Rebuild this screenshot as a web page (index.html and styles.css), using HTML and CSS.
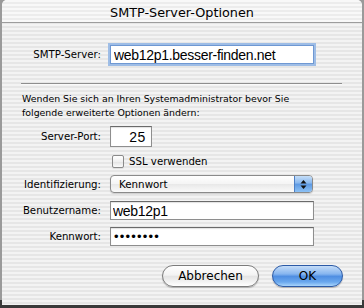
FILE: index.html
```html
<!DOCTYPE html>
<html lang="de">
<head>
    <meta charset="UTF-8">
    <meta name="viewport" content="width=device-width, initial-scale=1.0">
    <title>SMTP-Server-Optionen</title>
    <link rel="stylesheet" href="styles.css">
</head>
<body>
    <div class="window">
        <div class="titlebar">SMTP-Server-Optionen</div>
        <form class="content" id="smtpForm">
            <div class="form-row row-server">
                <label class="label" for="server">SMTP-Server:</label>
                <input class="field focused" type="text" id="server" value="web12p1.besser-finden.net">
            </div>
            <div class="divider"></div>
            <p class="note">Wenden Sie sich an Ihren Systemadministrator bevor Sie<br>folgende erweiterte Optionen ändern:</p>
            <div class="form-row row-port">
                <label class="label" for="port">Server-Port:</label>
                <input class="field port" type="text" id="port" value="25">
            </div>
            <div class="form-row row-check">
                <span class="checkbox"></span>
                <span class="check-label">SSL verwenden</span>
            </div>
            <div class="form-row row-auth">
                <span class="label">Identifizierung:</span>
                <div class="popup">
                    <span class="popup-value">Kennwort</span>
                    <span class="popup-arrows">
                        <svg width="7" height="11" viewBox="0 0 7 11">
                            <path d="M3.5 1 L6.5 4.5 L0.5 4.5 Z" fill="#111"/>
                            <path d="M3.5 10 L6.5 6.5 L0.5 6.5 Z" fill="#111"/>
                        </svg>
                    </span>
                </div>
            </div>
            <div class="form-row row-user">
                <label class="label" for="user">Benutzername:</label>
                <input class="field" type="text" id="user" value="web12p1">
            </div>
            <div class="form-row row-pass">
                <label class="label" for="pass">Kennwort:</label>
                <div class="field dots" id="pass">&bull;&bull;&bull;&bull;&bull;&bull;&bull;&bull;</div>
            </div>
            <div class="buttons">
                <button type="button" class="btn">Abbrechen</button>
                <button type="submit" class="btn btn-default">OK</button>
            </div>
        </form>
    </div>
</body>
</html>
```

FILE: styles.css
```css
* { box-sizing: border-box; }
html, body { margin: 0; height: 100%; }
body {
    background: linear-gradient(to bottom, #9a9a9a 0, #9a9a9a 300px, #3a3a3a 300px);
    font-family: "DejaVu Sans", Verdana, sans-serif;
    color: #000;
    overflow: hidden;
}
.window {
    margin: 0 2px;
    width: 360px;
    height: 305px;
    border-radius: 5px 5px 0 0;
    background: repeating-linear-gradient(to bottom, #f3f3f3 0, #f3f3f3 2px, #e6e6e6 2px, #e6e6e6 4px);
    display: flex;
    flex-direction: column;
    overflow: hidden;
}
.titlebar {
    height: 23px;
    border-bottom: 1px solid #9c9c9c;
    text-align: center;
    font-size: 12.8px;
    line-height: 25px;
    background: repeating-linear-gradient(to bottom, #f8f8f8 0, #f8f8f8 2px, #ececec 2px, #ececec 4px);
}
.content { display: flex; flex-direction: column; margin: 0; }
.form-row { display: flex; align-items: center; }
.label {
    width: 99px;
    margin-right: 9px;
    text-align: right;
    font-size: 10.2px;
    white-space: nowrap;
}
.field {
    width: 204px;
    height: 19px;
    padding: 0 2px;
    border: 1px solid #8e8e8e;
    border-top-color: #6a6a6a;
    background: #fff;
    box-shadow: inset 0 1px 1px rgba(0,0,0,.12);
    font-family: "Liberation Sans", Arial, sans-serif;
    font-size: 14px;
    letter-spacing: -0.3px;
    color: #000;
    outline: none;
    margin: 0;
}
.field.focused {
    padding-left: 3px;
    border-color: #6f98d2;
    box-shadow: 0 0 0 2px #9ebde6;
}
.row-server { margin-top: 22px; }
.divider {
    height: 1px;
    margin: 19px 20px 0 19px;
    background: #8e8e8e;
    box-shadow: 0 1px 0 #fafafa;
}
.note {
    margin: 8px 0 0 20px;
    font-size: 9.4px;
    line-height: 14px;
}
.row-port { margin-top: 6px; }
.field.port {
    width: 42px;
    height: 21px;
    text-align: right;
    padding-right: 5px;
    letter-spacing: 0.6px;
}
.row-check { margin-top: 8px; padding-left: 110px; }
.checkbox {
    width: 12px;
    height: 13px;
    border: 1px solid #8a8a8a;
    border-radius: 2px;
    background: linear-gradient(#ffffff, #f0f0f0 50%, #e2e2e2 51%, #fbfbfb);
    box-shadow: 0 1px 0 rgba(0,0,0,.08);
}
.check-label { margin-left: 5px; font-size: 10.2px; }
.row-auth { margin-top: 7px; }
.popup {
    width: 203px;
    height: 18px;
    display: flex;
    align-items: center;
    border: 1px solid #8a8a8a;
    border-radius: 4px;
    background: linear-gradient(#ffffff, #f4f4f4 50%, #e8e8e8 51%, #fafafa);
    box-shadow: 0 1px 1px rgba(0,0,0,.15);
    overflow: hidden;
}
.popup-value { flex: 1; padding-left: 8px; font-size: 10.3px; }
.popup-arrows {
    width: 18px;
    height: 100%;
    display: flex;
    align-items: center;
    justify-content: center;
    border-left: 1px solid #4d7fc4;
    background: linear-gradient(#c5def8, #86b6ee 45%, #5c98e2 50%, #8cc1f5 100%);
}
.row-user { margin-top: 8px; }
.row-pass { margin-top: 7px; }
.dots {
    font-size: 13px;
    letter-spacing: 1.2px;
    line-height: 17px;
    padding-left: 3px;
}
.buttons {
    display: flex;
    justify-content: flex-end;
    gap: 13px;
    margin: 19px 19px 0 0;
}
.btn {
    height: 22px;
    width: 97px;
    padding: 0;
    border: 1px solid #7b7b7b;
    border-radius: 11px;
    background: linear-gradient(#fefefe, #f3f3f3 45%, #e4e4e4 52%, #f6f6f6 85%, #ffffff);
    box-shadow: 0 1px 1px rgba(0,0,0,.25);
    font-family: "DejaVu Sans", Verdana, sans-serif;
    font-size: 12px;
    color: #000;
}
.btn-default {
    width: 71px;
    border-color: #2c5aa6;
    background: linear-gradient(#c4dcf8, #86b5ef 40%, #4f8ee2 52%, #6aa8ee 80%, #a8d4fb);
}
```
